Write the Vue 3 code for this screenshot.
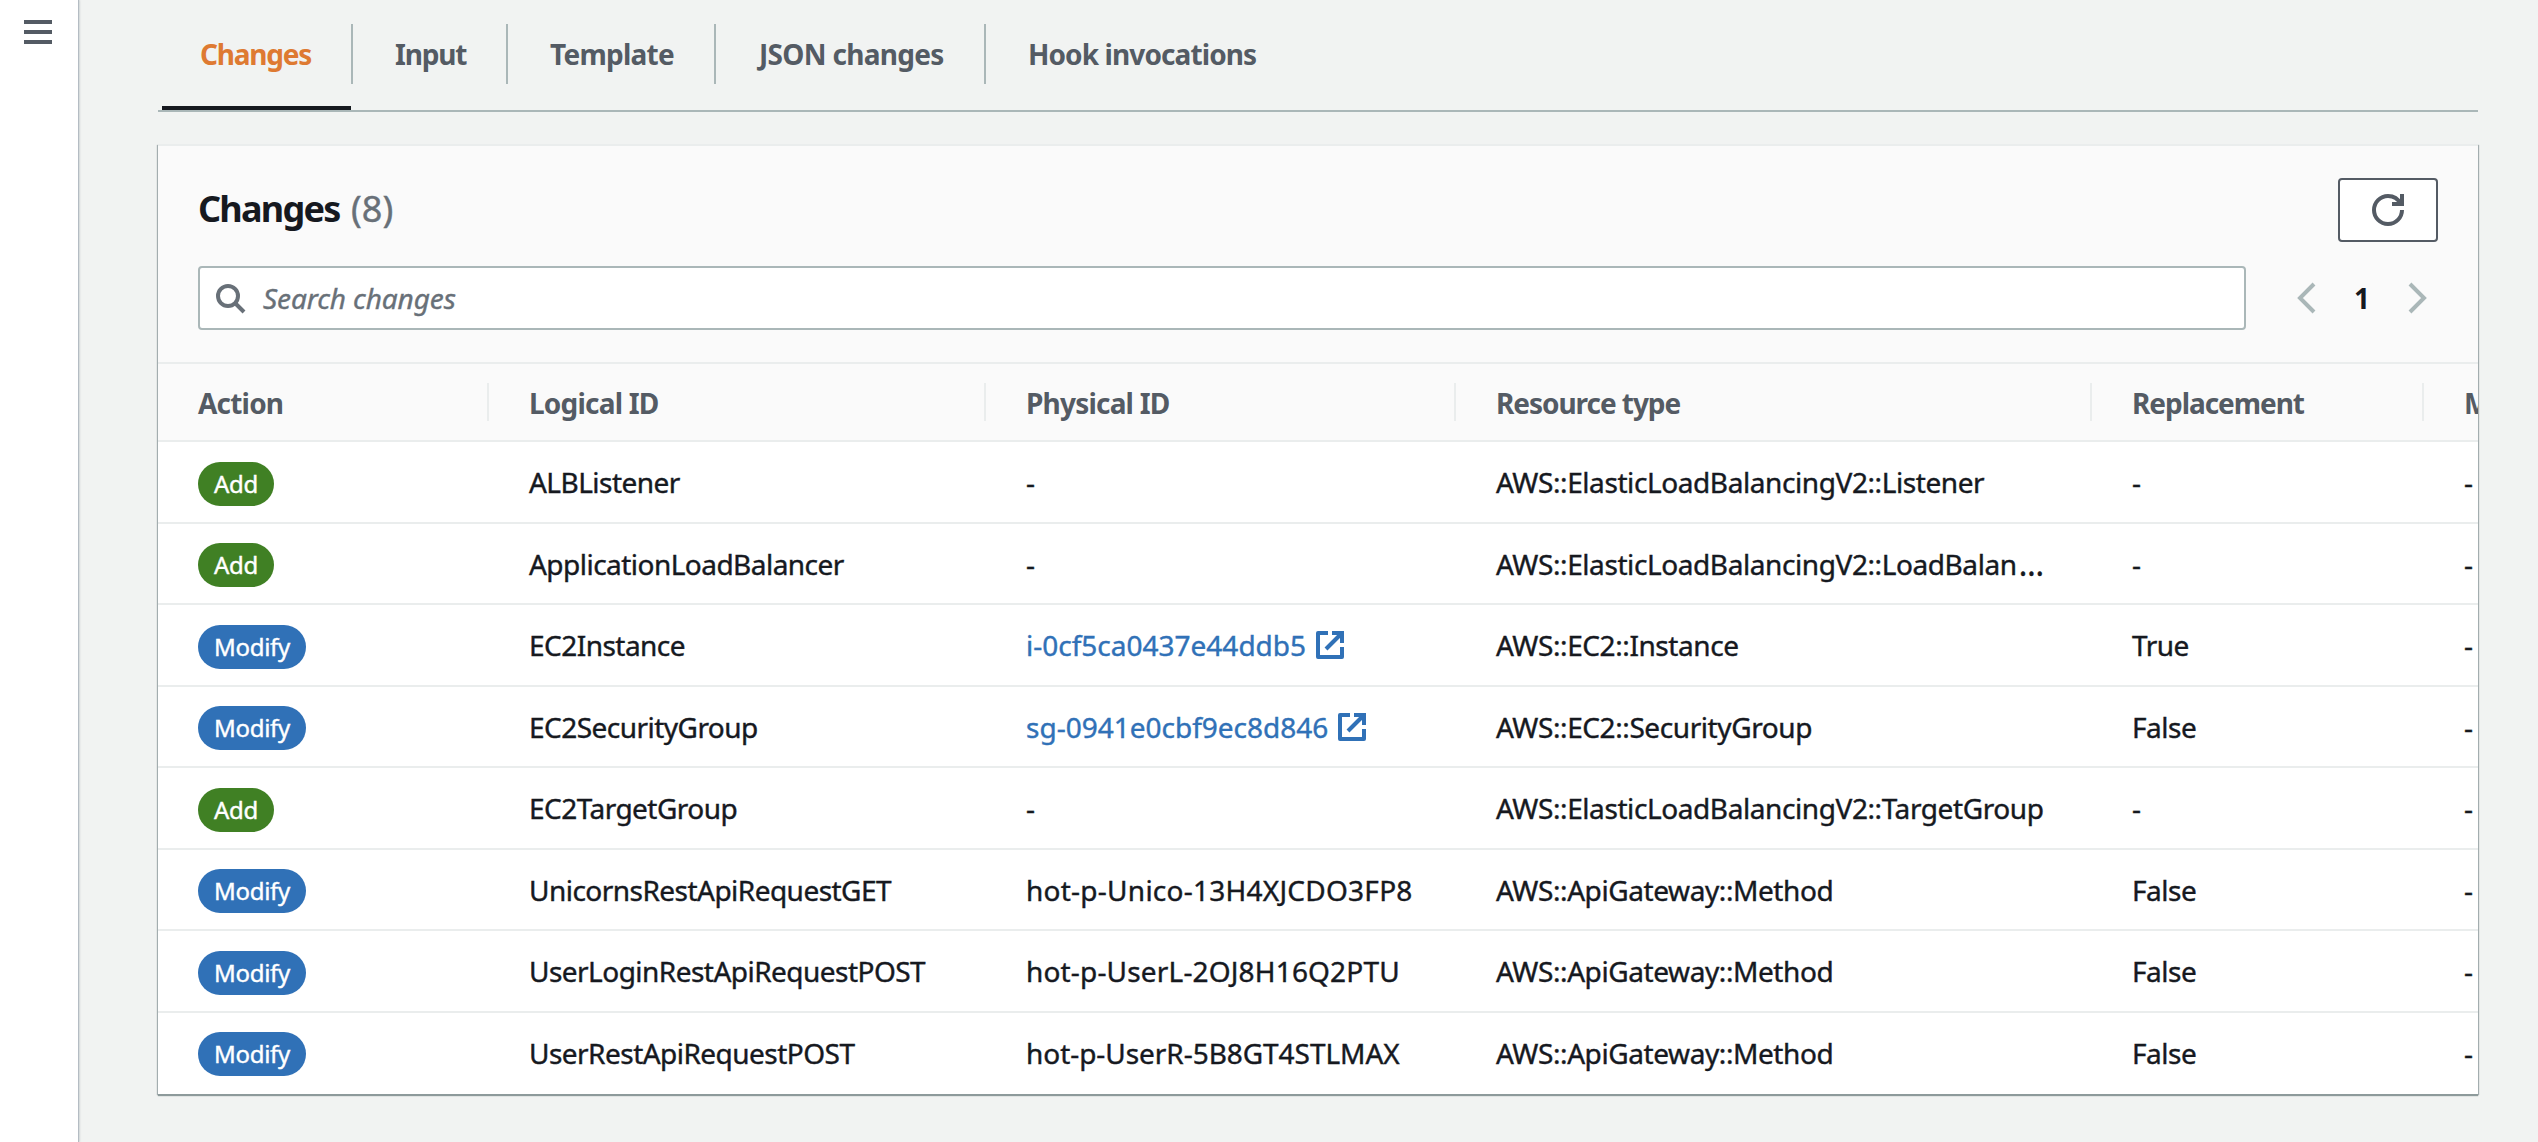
<script setup>
const tabs = [
  { label: 'Changes', cls: 't-changes', active: true },
  { label: 'Input', cls: 't-input' },
  { label: 'Template', cls: 't-template' },
  { label: 'JSON changes', cls: 't-json' },
  { label: 'Hook invocations', cls: 't-hook' },
]

const columns = [
  { label: 'Action', cls: 'h-short' },
  { label: 'Logical ID', cls: 'h-id' },
  { label: 'Physical ID', cls: 'h-id' },
  { label: 'Resource type' },
  { label: 'Replacement' },
  { label: 'Module' },
]

const changes = [
  { action: 'Add', logical: 'ALBListener', physical: '-', type: 'AWS::ElasticLoadBalancingV2::Listener', replacement: '-' },
  { action: 'Add', logical: 'ApplicationLoadBalancer', physical: '-', type: 'AWS::ElasticLoadBalancingV2::LoadBalan', truncated: true, replacement: '-' },
  { action: 'Modify', logical: 'EC2Instance', physical: 'i-0cf5ca0437e44ddb5', link: true, type: 'AWS::EC2::Instance', replacement: 'True' },
  { action: 'Modify', logical: 'EC2SecurityGroup', physical: 'sg-0941e0cbf9ec8d846', link: true, type: 'AWS::EC2::SecurityGroup', replacement: 'False' },
  { action: 'Add', logical: 'EC2TargetGroup', physical: '-', type: 'AWS::ElasticLoadBalancingV2::TargetGroup', replacement: '-' },
  { action: 'Modify', logical: 'UnicornsRestApiRequestGET', physical: 'hot-p-Unico-13H4XJCDO3FP8', pcls: 'wide', type: 'AWS::ApiGateway::Method', replacement: 'False' },
  { action: 'Modify', logical: 'UserLoginRestApiRequestPOST', physical: 'hot-p-UserL-2OJ8H16Q2PTU', pcls: 'mid', type: 'AWS::ApiGateway::Method', replacement: 'False' },
  { action: 'Modify', logical: 'UserRestApiRequestPOST', physical: 'hot-p-UserR-5B8GT4STLMAX', pcls: 'narrow', type: 'AWS::ApiGateway::Method', replacement: 'False' },
]
</script>

<template>
  <div class="page">
    <aside class="rail">
      <button class="menu" aria-label="Open navigation"><i></i><i></i><i></i></button>
    </aside>

    <main class="content">
      <nav class="tabs">
        <div v-for="t in tabs" :key="t.label" class="tab" :class="[t.cls, { active: t.active }]">
          <span class="tab-label">{{ t.label }}</span>
        </div>
      </nav>

      <section class="card">
        <header class="card-head">
          <div class="title-row">
            <h2><span class="title">Changes</span><span class="count">(8)</span></h2>
            <button class="refresh" aria-label="Refresh">
              <svg width="32" height="32" viewBox="0 0 16 16" fill="none" stroke="#545b64" stroke-width="2">
                <path d="M15 8c0 3.87-3.13 7-7 7s-7-3.13-7-7 3.13-7 7-7c2.79 0 5.2 1.63 6.33 4" />
                <path d="M15 0v5h-5" />
              </svg>
            </button>
          </div>
          <div class="filter-row">
            <div class="search">
              <svg width="32" height="32" viewBox="0 0 16 16" fill="none" stroke="#687078" stroke-width="2">
                <circle cx="7" cy="7" r="5" />
                <path d="M15 15l-4.5-4.5" />
              </svg>
              <span class="placeholder">Search changes</span>
            </div>
            <div class="pager">
              <svg width="32" height="32" viewBox="0 0 16 16" fill="none" stroke="#aab7b8" stroke-width="2">
                <path d="M12 1L5 8l7 7" />
              </svg>
              <span class="page-no">1</span>
              <svg width="32" height="32" viewBox="0 0 16 16" fill="none" stroke="#aab7b8" stroke-width="2">
                <path d="M4 1l7 7-7 7" />
              </svg>
            </div>
          </div>
        </header>

        <div class="row head">
          <div v-for="c in columns" :key="c.label" class="cell" :class="c.cls"><span>{{ c.label }}</span></div>
        </div>
        <div v-for="r in changes" :key="r.logical" class="row body">
          <div class="cell"><span class="badge" :class="r.action.toLowerCase()">{{ r.action }}</span></div>
          <div class="cell logical">{{ r.logical }}</div>
          <div class="cell" :class="r.pcls">
            <a v-if="r.link" class="link">
              <span>{{ r.physical }}</span>
              <svg width="32" height="32" viewBox="0 0 16 16" fill="none" stroke="#3071b7" stroke-width="2" stroke-linejoin="round">
                <path d="M9 2h5v5" stroke-linejoin="miter" />
                <path d="M6 10l8-8" />
                <path d="M14 9v5H2V2h5" />
              </svg>
            </a>
            <span v-else>{{ r.physical }}</span>
          </div>
          <div class="cell type">{{ r.type }}<span v-if="r.truncated" class="more">…</span></div>
          <div class="cell replacement">{{ r.replacement }}</div>
          <div class="cell">-</div>
        </div>
      </section>
    </main>
  </div>
</template>

<style>
body {
  margin: 0;
  background: #f1f3f2;
}
</style>

<style scoped>
* {
  box-sizing: border-box;
}
.page {
  display: flex;
  height: 1142px;
  overflow: hidden;
  background: #f1f3f2;
  color: #16191f;
  font: 28px/40px "Noto Sans", sans-serif;
}
.rail {
  width: 78px;
  flex: none;
  background: #fff;
  box-shadow: 1px 0 1px #b4bcc3, 2px 0 2px rgba(0, 28, 36, 0.1);
  padding: 20px 0 0 24px;
}
.menu {
  display: flex;
  flex-direction: column;
  gap: 6px;
  padding: 0;
  border: 0;
  background: none;
}
.menu i {
  width: 28px;
  height: 4px;
  background: #545b64;
}
.content {
  width: 2320px;
  margin-left: 80px;
}
.tabs {
  display: flex;
  height: 112px;
  padding-left: 4px;
  border-bottom: 2px solid #aab7b8;
}
.tab {
  height: 110px;
  padding-top: 24px;
  font-weight: 700;
  color: #545b64;
}
.tab-label {
  display: block;
  height: 60px;
  line-height: 61px;
  padding-left: 42px;
  border-right: 2px solid #aab7b8;
  white-space: nowrap;
}
.tab.active {
  color: #de7a32;
  display: flex;
  flex-direction: column;
  justify-content: space-between;
}
.tab.active::after {
  content: "";
  height: 4px;
  margin-right: 2px;
  background: #16191f;
}
.t-changes { width: 191px; letter-spacing: -1.2px; }
.t-changes .tab-label { padding-left: 38px; }
.t-input { width: 155px; letter-spacing: -1.2px; }
.t-template { width: 208px; letter-spacing: -0.74px; }
.t-json { width: 270px; letter-spacing: -0.7px; }
.t-json .tab-label { padding-left: 43px; }
.t-hook { letter-spacing: -0.9px; }
.t-hook .tab-label { border: 0; }

.card {
  height: 950px;
  margin-top: 32px;
  overflow: hidden;
  background: #fff;
  border-top: 2px solid #eaeded;
  box-shadow: 0 2px 1px #8d9a9b, 1px 1px 1px rgba(0, 28, 36, 0.3), -1px 1px 1px rgba(0, 28, 36, 0.3);
}
.card-head {
  height: 216px;
  padding: 32px 40px 0;
  background: #fafafa;
}
.title-row {
  display: flex;
  justify-content: space-between;
  height: 64px;
}
h2 {
  display: flex;
  margin: 0;
  font-size: 36px;
  line-height: 62px;
}
.title {
  width: 153px;
  letter-spacing: -1.75px;
}
.count {
  font-weight: 400;
  color: #687078;
  -webkit-text-stroke: 0.4px currentColor;
}
.refresh {
  display: flex;
  align-items: center;
  justify-content: center;
  width: 100px;
  height: 64px;
  padding: 0;
  background: #fff;
  border: 2px solid #545b64;
  border-radius: 4px;
}
.filter-row {
  display: flex;
  margin-top: 24px;
}
.search {
  display: flex;
  align-items: center;
  width: 2048px;
  height: 64px;
  padding-left: 14px;
  background: #fff;
  border: 2px solid #aab7b8;
  border-radius: 4px;
}
.placeholder {
  margin-left: 17px;
  font-style: italic;
  letter-spacing: -0.1px;
  color: #687078;
  -webkit-text-stroke: 0.4px currentColor;
}
.pager {
  display: flex;
  align-items: center;
  margin-left: 44px;
}
.page-no {
  width: 80px;
  text-align: center;
  font-weight: 700;
}
.row {
  display: grid;
  grid-template-columns: 331px 497px 470px 636px 332px 300px;
  height: 81.5px;
  border-bottom: 2px solid #eaeded;
}
.body {
  -webkit-text-stroke: 0.4px currentColor;
}
.row:last-child {
  border-bottom-color: #fff;
}
.cell {
  display: flex;
  align-items: center;
  padding-left: 40px;
  white-space: nowrap;
}
.body .cell {
  padding-top: 1px;
}
.head {
  height: 80px;
  background: #fafafa;
  border-top: 2px solid #eaeded;
  font-weight: 700;
  color: #545b64;
  letter-spacing: -1.05px;
}
.h-short,
.h-id {
  letter-spacing: -0.8px;
}
.head .cell > span {
  flex: 1;
  padding-top: 1px;
}
.head .cell::after {
  content: "";
  width: 2px;
  height: 38px;
  background: #eaeded;
}
.badge {
  height: 44px;
  margin-top: 3px;
  padding: 0 16px;
  border-radius: 22px;
  font-size: 24px;
  line-height: 44px;
  color: #fff;
}
.add { background: #408024; letter-spacing: -0.3px; }
.modify { background: #3071b7; letter-spacing: -0.3px; }
.logical { letter-spacing: -0.53px; }
.wide { letter-spacing: 0.25px; }
.mid { letter-spacing: 0.17px; }
.narrow { letter-spacing: -0.05px; }
.type { letter-spacing: -0.41px; }
.more {
  margin-left: 2px;
  font-size: 32px;
}
.replacement { letter-spacing: -0.5px; }
.link {
  display: flex;
  align-items: center;
  gap: 8px;
  color: #3071b7;
}
</style>
